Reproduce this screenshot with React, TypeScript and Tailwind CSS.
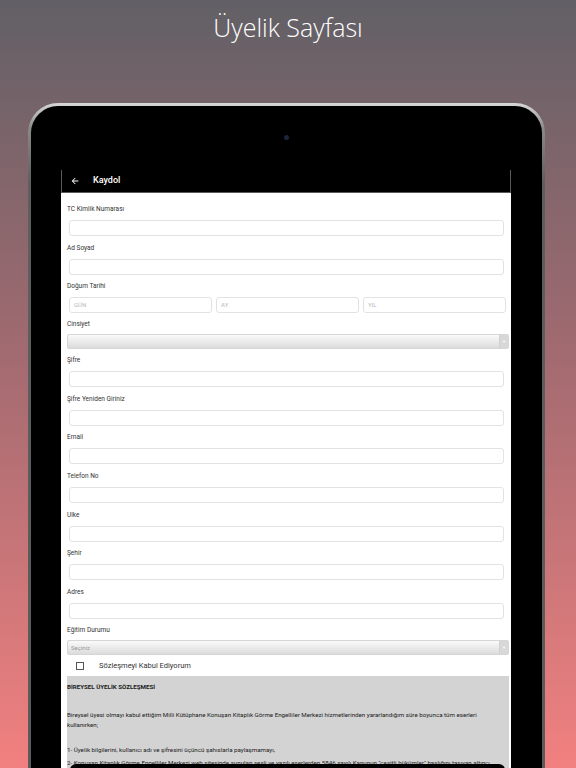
import React from "react"

const font = { fontFamily: "Roboto, 'Noto Sans', sans-serif" }

function Label({ children }: { children: React.ReactNode }) {
  return <div className="h-[12px] text-[6.5px] leading-[12px] text-[#333]">{children}</div>
}

function Input({ placeholder }: { placeholder?: string }) {
  return (
    <div className="h-[16px] rounded-[3px] border border-[#e2e2e2] bg-white px-[4px] text-[6px] leading-[14px] text-[#b8b8b8]">
      {placeholder}
    </div>
  )
}

function Field({ label }: { label: string }) {
  return (
    <div className="pb-[5.6px]">
      <Label>{label}</Label>
      <div className="mt-[5px] ml-[2px] mr-[5px]">
        <Input />
      </div>
    </div>
  )
}

function Select({ value }: { value?: string }) {
  return (
    <div className="flex h-[15px] rounded-[2px] border border-[#d6d6d6] bg-gradient-to-b from-[#fafafa] to-[#dcdcdc]">
      <div className="flex-1 pl-[3px] text-[6px] leading-[13px] text-[#9a9a9a]">{value}</div>
      <div className="flex w-[9px] items-center justify-center border-l border-[#d0d0d0] bg-[#d8d8d8] text-[4px] text-white">▼</div>
    </div>
  )
}

export default function App() {
  return (
    <div
      className="relative h-[768px] w-[576px] overflow-hidden bg-gradient-to-b from-[#616066] via-[#a06a70] via-45% to-[#f28080]"
      style={font}
    >
      {/* TITLE */}
      <div className="flex h-[103px] justify-center pt-[9px]">
        <h1
          className="text-[25px] font-light leading-[36px] text-white"
          style={{ fontFamily: "'Open Sans', sans-serif" }}
        >
          Üyelik Sayfası
        </h1>
      </div>

      {/* TABLET */}
      <div className="ml-[28px] w-[517px] rounded-t-[30px] bg-[linear-gradient(180deg,#d8d8d8,#8a8a8a_25px,#5e5e5e_80px,#5a5a5a)] px-[3px] pt-[3px]">
        <div className="relative h-[700px] rounded-t-[27px] bg-black pl-[30px] pt-[64px]">
          <div className="absolute left-[253px] top-[29px] h-[5px] w-[5px] rounded-full bg-[#1c2440]" />

          <div className="w-[450px]">
            {/* APP BAR */}
            <div className="flex h-[23px] items-center border-x border-b border-[#5a5a5a] bg-black pl-[8px]">
              <svg viewBox="0 0 24 24" className="h-[10px] w-[10px] fill-white">
                <path d="M20 11H7.83l5.59-5.59L12 4l-8 8 8 8 1.41-1.41L7.83 13H20v-2z" />
              </svg>
              <span className="ml-[13px] text-[9px] font-medium text-white">Kaydol</span>
            </div>

            {/* FORM */}
            <div className="h-[600px] bg-white pl-[6px] pr-[2px] pt-[10px]">
              <Field label="TC Kimlik Numarası" />
              <Field label="Ad Soyad" />

              <div className="pb-[5px]">
                <Label>Doğum Tarihi</Label>
                <div className="mt-[5px] ml-[2px] mr-[3px] grid grid-cols-3 gap-[4px]">
                  <Input placeholder="GÜN" />
                  <Input placeholder="AY" />
                  <Input placeholder="YIL" />
                </div>
              </div>

              <div className="pb-[5px]">
                <Label>Cinsiyet</Label>
                <div className="mt-[4px]">
                  <Select />
                </div>
              </div>

              <Field label="Şifre" />
              <Field label="Şifre Yeniden Giriniz" />
              <Field label="Email" />
              <Field label="Telefon No" />
              <Field label="Ulke" />
              <Field label="Şehir" />
              <Field label="Adres" />

              <div>
                <Label>Eğitim Durumu</Label>
                <div className="mt-[4px]">
                  <Select value="Seçiniz" />
                </div>
              </div>

              <div className="flex h-[21px] items-center pl-[9px]">
                <div className="h-[8px] w-[8px] border border-[#555]" />
                <span className="ml-[15px] text-[7.5px] text-[#333]">Sözleşmeyi Kabul Ediyorum</span>
              </div>

              {/* CONTRACT */}
              <div className="h-[120px] bg-[#d3d3d3] pt-[6px] text-[6.2px] leading-[10px] text-[#222]">
                <p className="font-bold">BİREYSEL ÜYELİK SÖZLEŞMESİ</p>
                <p className="mt-[18px]">
                  Bireysel üyesi olmayı kabul ettiğim Milli Kütüphane Konuşan Kitaplık Görme Engelliler Merkezi hizmetlerinden yararlandığım süre boyunca tüm eserleri
                  <br />
                  kullanırken;
                </p>
                <p className="mt-[15px]">1- Üyelik bilgilerini, kullanıcı adı ve şifresini üçüncü şahıslarla paylaşmamayı,</p>
                <p className="mt-[3px] whitespace-nowrap">
                  2- Konuşan Kitaplık Görme Engelliler Merkezi web sitesinde sunulan sesli ve yazılı eserlerden 5846 sayılı Kanunun "çeşitli hükümler" başlığını taşıyan altıncı
                </p>
              </div>
            </div>
          </div>

          <div className="absolute left-[39px] top-[658px] h-[8px] w-[435px] rounded-t-[6px] bg-black" />
        </div>
      </div>
    </div>
  )
}
